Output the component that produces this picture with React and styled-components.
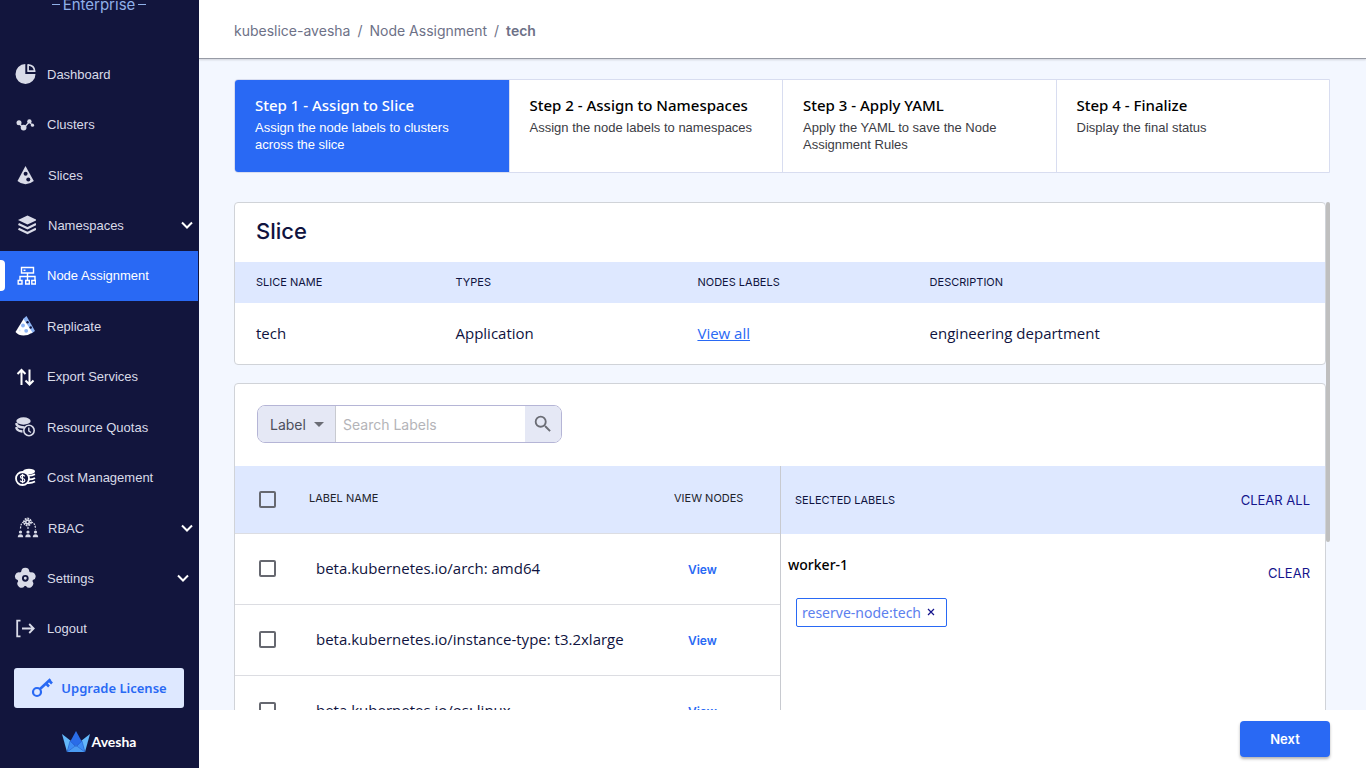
import React, { useState, useEffect, useRef } from 'react';
import styled, { createGlobalStyle } from 'styled-components';

const GlobalStyle = createGlobalStyle`
  *, *::before, *::after { box-sizing: border-box; }
  body {
    margin: 0;
    font-family: 'Noto Sans', sans-serif;
    color: #0f1340;
    background: #f3f7ff;
  }
  h1, h2, p, ul { margin: 0; padding: 0; }
  button, input, select { font-family: inherit; }
`;

const Page = styled.div`
  display: flex;
  height: 100vh;
`;

/* sidebar */

const Sidebar = styled.aside`
  display: flex;
  flex-direction: column;
  flex: 0 0 199px;
  padding-right: 1px;
  background: #12153d;
  overflow: hidden;
`;

const Edition = styled.div`
  display: flex;
  justify-content: center;
  flex: 0 0 49px;
  gap: 3px;
  overflow: hidden;
  color: #8fb0e8;
  font-family: Inter, sans-serif;
  font-size: 15px;
  line-height: 10px;

  &::before,
  &::after {
    content: '';
    width: 8px;
    height: 1px;
    margin-top: 4px;
    background: #8fb0e8;
  }
`;

const NavList = styled.ul`
  display: flex;
  flex-direction: column;
  flex: 1;
  list-style: none;
`;

const NavItem = styled.li`
  display: flex;
  flex: 1;
`;

const NavLink = styled.a`
  display: flex;
  align-items: center;
  flex: 1;
  gap: ${props => (props.$wide ? '12px' : '11px')};
  padding: 0 ${props => (props.$indent ? '9px' : '5px')} 0 14px;
  color: ${props => (props.$active ? '#fff' : '#d9dbe8')};
  background: ${props => (props.$active ? '#2969f4' : 'transparent')};
  font-family: 'Liberation Sans', Arial, sans-serif;
  font-size: 13px;
  text-decoration: none;

  &::before {
    content: '';
    display: ${props => (props.$active ? 'block' : 'none')};
    width: 5px;
    height: 31px;
    margin: 0 -2px 0 -14px;
    border-radius: 0 4px 4px 0;
    background: #fff;
  }

  svg:first-of-type {
    flex: none;
  }
`;

const NavText = styled.span`
  flex: 1;
  white-space: nowrap;
`;

const SidebarFooter = styled.div`
  display: flex;
  flex-direction: column;
  align-items: center;
  gap: 23px;
  flex: 0 0 114px;
  padding: 14px 14px 0;
`;

const UpgradeButton = styled.button`
  display: flex;
  align-items: center;
  justify-content: center;
  gap: 8px;
  width: 100%;
  height: 40px;
  padding: 0;
  border: 0;
  border-radius: 3px;
  background: #dee8ff;
  color: #2969f4;
  font-size: 13px;
  font-weight: 600;
  white-space: nowrap;
`;

const Brand = styled.div`
  display: flex;
  align-items: center;
  gap: 2px;
  color: #fff;
  font-family: Lato, sans-serif;
  font-size: 14px;
  font-weight: 700;
  line-height: 22px;
`;

/* main column */

const Main = styled.main`
  display: flex;
  flex-direction: column;
  flex: 1;
  min-width: 0;
`;

const TopBar = styled.header`
  flex: 0 0 59px;
  padding: 21px 35px 0;
  border-bottom: 1px solid #979ba5;
  box-shadow: 0 1px 2px rgba(0, 0, 0, 0.15);
  background: #fff;
`;

const Crumbs = styled.nav`
  display: flex;
  gap: 7px;
  color: #6d7187;
  font-family: Inter, sans-serif;
  font-size: 14px;
  line-height: 20px;
`;

const Crumb = styled.a`
  color: inherit;
  font-weight: ${props => (props.$current ? 600 : 400)};
  text-decoration: none;
`;

const Content = styled.div`
  display: flex;
  flex-direction: column;
  flex: 1;
  gap: 29px;
  min-height: 0;
  padding: 20px 36px 0 35px;
`;

const Steps = styled.div`
  display: grid;
  grid-template-columns: repeat(4, minmax(0, 1fr));
  flex: none;
  border: 1px solid #d8ddf0;
  border-radius: 4px 0 0 4px;
  background: #fff;
`;

const Step = styled.section`
  min-height: 92px;
  padding: 15px 20px;
  border-left: ${props => (props.$active ? 0 : '1px solid #d8ddf0')};
  border-radius: ${props => (props.$active ? '3px 0 0 3px' : 0)};
  background: ${props => (props.$active ? '#2969f4' : '#fff')};
  color: ${props => (props.$active ? '#fff' : '#000')};

  p {
    margin-top: 4px;
    color: ${props => (props.$active ? '#fff' : '#3c3c44')};
    font-family: 'Liberation Sans', Arial, sans-serif;
    font-size: 13px;
    line-height: 17px;
  }
`;

const StepTitle = styled.h2`
  font-size: 15px;
  font-weight: 500;
  line-height: 20px;
`;

const ScrollPane = styled.div`
  display: flex;
  flex: 1;
  min-height: 0;
`;

const ScrollArea = styled.div`
  display: flex;
  flex-direction: column;
  flex: 1;
  gap: 18px;
  min-width: 0;
  overflow-y: auto;
  scrollbar-width: none;
`;

const ScrollTrack = styled.div`
  flex: 0 0 4px;
  overflow: hidden;
`;

const ScrollThumb = styled.div`
  border-radius: 2px;
  background: #bfbfbf;
`;

const Card = styled.section`
  flex: none;
  border: 1px solid #d0d3d8;
  border-radius: 4px;
  background: #fff;
`;

const CardTitle = styled.h1`
  padding: 14px 21px 17px;
  font-family: Inter, sans-serif;
  font-size: 22px;
  font-weight: 500;
  line-height: 28px;
`;

const Table = styled.table`
  width: 100%;
  border-collapse: collapse;
  table-layout: fixed;
  text-align: left;
`;

const SliceHead = styled.th`
  width: ${props => props.$width};
  height: 41px;
  padding: 0 0 2px 21px;
  background: #dee8ff;
  font-family: Inter, sans-serif;
  font-size: 11px;
  font-weight: 400;
`;

const SliceCell = styled.td`
  height: 61px;
  padding: 0 0 2px 21px;
  font-family: 'Open Sans', sans-serif;
  font-size: 15px;
  font-weight: 500;

  a {
    color: #2969f4;
  }
`;

const Toolbar = styled.div`
  padding: 21px 22px 23px;
`;

const Search = styled.form`
  display: flex;
  width: 305px;
  height: 38px;
  overflow: hidden;
  border: 1px solid #b5b5d6;
  border-radius: 8px;
`;

const SelectBox = styled.div`
  display: grid;
  flex: 0 0 78px;
  align-items: center;
  border-right: 1px solid #c8cad0;
  background: #e5e8f5;

  > * {
    grid-area: 1 / 1;
  }
  svg {
    justify-self: end;
    margin-right: 11px;
    pointer-events: none;
  }
`;

const Select = styled.select`
  width: 100%;
  height: 36px;
  padding: 0 0 0 12px;
  appearance: none;
  border: 0;
  background: transparent;
  color: #4d4f5c;
  font-family: Inter, sans-serif;
  font-size: 14px;
`;

const SearchInput = styled.input`
  flex: 1;
  min-width: 0;
  padding: 0 7px;
  border: 0;
  outline: 0;
  font-family: Inter, sans-serif;
  font-size: 14px;

  &::placeholder {
    color: #b4b4b8;
  }
`;

const SearchButton = styled.button`
  display: grid;
  place-items: center;
  flex: 0 0 36px;
  padding: 0;
  border: 0;
  background: #e5e8f5;
`;

const Split = styled.div`
  display: grid;
  grid-template-columns: 1fr 1fr;
`;

const LabelHead = styled.th`
  width: ${props => props.$width};
  height: 67px;
  padding: 0 0 2px 10px;
  border-bottom: 1px solid #dcdde2;
  background: #dee8ff;
  color: #22242c;
  font-family: Inter, sans-serif;
  font-size: 11px;
  font-weight: 400;
`;

const LabelCell = styled.td`
  height: 71px;
  padding: 0 0 2px 17px;
  border-bottom: 1px solid #dcdde2;
  font-family: 'Open Sans', sans-serif;
  font-size: 15px;
  font-weight: 500;
  white-space: nowrap;
`;

const CheckHead = styled(LabelHead)`
  padding: 0 0 0 24px;
`;

const CheckCell = styled(LabelCell)`
  padding: 0 0 0 24px;
`;

const ViewCell = styled(LabelCell)`
  padding: 0 0 0 24px;
`;

const Checkbox = styled.input`
  display: block;
  width: 17px;
  height: 17px;
  margin: 0;
  appearance: none;
  border: 2px solid #666870;
  border-radius: 2px;

  &:checked {
    background: #2969f4;
  }
`;

const TextButton = styled.button`
  padding: 0;
  border: 0;
  background: none;
  color: ${props => (props.$primary ? '#2969f4' : '#14148c')};
  font-family: Inter, sans-serif;
  font-size: ${props => (props.$primary ? '12px' : '13px')};
  font-weight: ${props => (props.$primary ? 600 : 400)};
  line-height: 20px;
`;

const Selected = styled.div`
  border-left: 1px solid #c8cad0;
`;

const SelectedHead = styled.div`
  display: flex;
  align-items: center;
  justify-content: space-between;
  height: 68px;
  padding: 0 15px 0 14px;
  background: #dee8ff;
  font-family: Inter, sans-serif;
  font-size: 11px;
`;

const Worker = styled.div`
  display: flex;
  justify-content: space-between;
  padding: 21px 15px 0 7px;
  color: #000;
  font-size: 14px;
  font-weight: 500;
  line-height: 20px;

  button {
    margin-top: 8px;
  }
`;

const Chip = styled.span`
  display: inline-flex;
  align-items: center;
  gap: 6px;
  height: 29px;
  margin: 15px 15px 0;
  padding: 0 11px 0 5px;
  border: 1px solid #2969f4;
  border-radius: 2px;
  color: #5c80ee;
  font-size: 14px;
`;

const ChipClose = styled.button`
  display: flex;
  padding: 0 0 2px;
  border: 0;
  background: none;
  color: #14148c;
`;

const ActionBar = styled.footer`
  display: flex;
  justify-content: flex-end;
  flex: 0 0 58px;
  padding: 11px 36px;
  background: #fff;
`;

const NextButton = styled.button`
  width: 90px;
  height: 36px;
  border: 0;
  border-radius: 4px;
  background: #2969f4;
  box-shadow: 0 2px 3px rgba(0, 0, 0, 0.3);
  color: #fff;
  font-family: Inter, sans-serif;
  font-size: 13px;
  font-weight: 600;
`;

/* icons */

const Icon = ({ children, size = 22, ...rest }) => (
  <svg width={size} height={size} viewBox="0 0 22 22" fill="none" aria-hidden="true" {...rest}>
    {children}
  </svg>
);

const light = '#d9dbe8';

const DashboardIcon = () => (
  <Icon>
    <path d="M11.300 1A10 10 0 1 0 21.500 11H11.300Z" fill={light} />
    <path d="M12.400 0H22V10H12.400Z" fill="#12153d" />
    <path d="M14.100 1.800Q20.300 2.300 20.700 8.200H14.100Z" stroke={light} strokeWidth="1.700" strokeLinejoin="round" />
  </Icon>
);

const ClustersIcon = () => (
  <Icon>
    <path d="M5 9 9.500 14.500 15.500 7.500 18.500 12" stroke={light} strokeWidth="1.300" />
    <circle cx="5" cy="8.700" r="2.500" fill={light} />
    <circle cx="9.600" cy="13.600" r="2.900" fill={light} />
    <circle cx="15.400" cy="7.400" r="2.200" fill={light} />
    <circle cx="18.500" cy="11.200" r="1.600" fill={light} />
  </Icon>
);

const SlicesIcon = () => (
  <Icon>
    <path d="M11.500 2 19.800 17Q16 20.200 11.500 20.200T3.500 17Z" fill={light} />
    <circle cx="11.600" cy="9.700" r="2" fill="#12153d" />
    <circle cx="14.300" cy="15.500" r="2" fill="#12153d" />
  </Icon>
);

const NamespacesIcon = () => (
  <Icon>
    <path d="M13.500 1.500 23 6l-9.500 4.500L4 6Z" fill={light} />
    <path d="m4.500 10 9 4.300 8.500-4.300M4.500 14.800l9 4.200 8.500-4.200" stroke={light} strokeWidth="2.200" />
  </Icon>
);

const NodeIcon = () => (
  <Icon>
    <path
      d="M7.500 2.500h12v5.500h-12ZM13.500 8v7M6 15v-3.500h15V15M4.200 15.500h3.800v3.500H4.200ZM11.700 15.500h3.600v3.500h-3.600ZM17.800 15.500h3.700v3.500h-3.700Z"
      stroke="#fff"
      strokeWidth="1.400"
    />
    <path d="M9.500 5.300h2" stroke="#fff" strokeWidth="1.500" />
  </Icon>
);

const ReplicateIcon = () => (
  <Icon>
    <path d="m12.500 1 8.500 15-3.500 2.500L9 4Z" fill="#8db4f5" />
    <path d="M9.500 4 18.500 17.500Q14.500 20.500 9.500 20.500T1.500 17Z" fill="#fff" />
    <circle cx="9" cy="10.500" r="1.900" fill="#8db4f5" />
    <circle cx="12.200" cy="15.800" r="1.900" fill="#8db4f5" />
    <circle cx="5.700" cy="15.500" r="1" fill="#dce7fc" />
    <circle cx="13.500" cy="7.200" r="1.200" fill="#12153d" />
    <circle cx="16.700" cy="12.500" r="1.200" fill="#12153d" />
  </Icon>
);

const ExportIcon = () => (
  <Icon>
    <path d="M7.500 19V4M3.500 8l4-4 4 4M15.500 3.500v15M11.500 14.500l4 4 4-4" stroke="#fff" strokeWidth="2" />
  </Icon>
);

const QuotasIcon = () => (
  <Icon>
    <ellipse cx="9.500" cy="5" rx="7.200" ry="3.700" fill={light} />
    <path d="M2.500 8.500q2 3 8 3M2.500 12.500q1.500 2.800 6 3M2.500 7v2M2.500 11v2" stroke={light} strokeWidth="2.300" />
    <circle cx="15" cy="14.500" r="5.200" fill="#12153d" stroke={light} strokeWidth="1.600" />
    <path d="M14.800 11.500v3.500l2.200 1.500" stroke={light} strokeWidth="1.400" />
  </Icon>
);

const CostIcon = () => (
  <Icon>
    <ellipse cx="15" cy="4.500" rx="6" ry="2.700" fill="#fff" />
    <path d="M12 8.500q5 .8 9-1.300M13 12.300q5 .6 8-1.400M13 16q4.500.5 8-1.500" stroke="#fff" strokeWidth="1.800" />
    <circle cx="8.500" cy="11.500" r="6.500" fill="#12153d" stroke="#fff" strokeWidth="1.800" />
    <path d="M10.800 9.300q-1-1.100-2.300-1.100-2 0-2 1.600t2.100 1.700 2.200 1.700-2.300 1.700q-1.600 0-2.400-1.200M8.500 6.800v9.500" stroke="#fff" strokeWidth="1.200" />
  </Icon>
);

const person = x => (
  <g key={x} fill={light}>
    <circle cx={x} cy="15" r="1.600" />
    <path d={`M${x - 2.700} 20.300q0-3 2.700-3t2.700 3Z`} />
  </g>
);

const RbacIcon = () => (
  <Icon overflow="visible">
    <circle cx="13.500" cy="5" r="3.300" stroke={light} strokeWidth="2.200" strokeDasharray="1.700 .8" />
    <circle cx="13.500" cy="5" r="2.500" fill={light} />
    <circle cx="13.500" cy="5" r="1" fill="#12153d" />
    <path d="M10 5Q6.500 5.500 6.500 12.500M17 5q4.500.5 4.500 7.500M14 10v3" stroke={light} strokeWidth="1.200" strokeDasharray="2 1" />
    {[6.500, 14, 21.500].map(person)}
  </Icon>
);

const SettingsIcon = () => (
  <Icon>
    {[0, 72, 144, 216, 288].map(angle => (
      <circle key={angle} cx="11.300" cy="4.700" r="4" fill={light} transform={`rotate(${angle} 11.300 11.300)`} />
    ))}
    <circle cx="11.300" cy="11.300" r="7.800" fill={light} />
    <circle cx="11.300" cy="11.300" r="2.400" stroke="#12153d" strokeWidth="1.900" />
  </Icon>
);

const LogoutIcon = () => (
  <Icon>
    <path d="M6.500 2.700H3.200v15.600h3.300" stroke={light} strokeWidth="1.800" />
    <path d="M8 10.500h11.500M15.200 6l4.500 4.500-4.500 4.500" stroke={light} strokeWidth="1.800" />
  </Icon>
);

const KeyIcon = () => (
  <Icon>
    <circle cx="6" cy="15" r="4" stroke="#2969f4" strokeWidth="2.200" />
    <path d="M9 12 19.500 2.200M15 6.500l3 3M18 3.500l3 3" stroke="#2969f4" strokeWidth="2.600" />
  </Icon>
);

const Chevron = () => (
  <svg width="12" height="8" viewBox="0 0 12 8" fill="none" aria-hidden="true">
    <path d="m1 1.500 5 5 5-5" stroke="#fff" strokeWidth="2" />
  </svg>
);

const BrandLogo = () => (
  <svg width="28" height="22" viewBox="0 0 28 22" aria-hidden="true">
    <path d="M0 3 9 10 5 21Z" fill="#63b8fb" />
    <path d="M28 3 19 10l4 11Z" fill="#63b8fb" />
    <path d="M14 0 20 11 14 16 8 11Z" fill="#2a6ce8" />
    <path d="m8 10 6 6-9 5Z" fill="#3d8df5" />
    <path d="m20 10-6 6 9 5Z" fill="#3d8df5" />
    <path d="m14 14 9 7H5Z" fill="#4b9cf3" />
    <path d="M5 21 8 10l6 5.500L20 10l3 11M5 21l9-6.500L23 21" fill="none" stroke="#1e55c4" strokeWidth=".5" />
  </svg>
);

const navItems = [
  { label: 'Dashboard', icon: DashboardIcon },
  { label: 'Clusters', icon: ClustersIcon },
  { label: 'Slices', icon: SlicesIcon, wide: true },
  { label: 'Namespaces', icon: NamespacesIcon, expandable: true, wide: true },
  { label: 'Node Assignment', icon: NodeIcon, active: true },
  { label: 'Replicate', icon: ReplicateIcon },
  { label: 'Export Services', icon: ExportIcon },
  { label: 'Resource Quotas', icon: QuotasIcon },
  { label: 'Cost Management', icon: CostIcon },
  { label: 'RBAC', icon: RbacIcon, expandable: true, wide: true },
  { label: 'Settings', icon: SettingsIcon, expandable: true, indent: true },
  { label: 'Logout', icon: LogoutIcon },
];

const steps = [
  { title: 'Step 1 - Assign to Slice', text: 'Assign the node labels to clusters across the slice' },
  { title: 'Step 2 - Assign to Namespaces', text: 'Assign the node labels to namespaces' },
  { title: 'Step 3 - Apply YAML', text: 'Apply the YAML to save the Node Assignment Rules' },
  { title: 'Step 4 - Finalize', text: 'Display the final status' },
];

const nodeLabels = [
  'beta.kubernetes.io/arch: amd64',
  'beta.kubernetes.io/instance-type: t3.2xlarge',
  'beta.kubernetes.io/os: linux',
  'kubernetes.io/arch: amd64',
  'kubernetes.io/hostname: worker-1',
  'kubernetes.io/os: linux',
];

const App = () => {
  const [checked, setChecked] = useState([]);
  const [query, setQuery] = useState('');
  const [thumb, setThumb] = useState({ height: 0, offset: 0 });
  const scrollRef = useRef(null);

  // keeps the slim scroll thumb in step with the scrolled area
  const updateThumb = () => {
    const { clientHeight, scrollHeight, scrollTop } = scrollRef.current;
    const ratio = clientHeight / scrollHeight;
    setThumb({ height: ratio < 1 ? clientHeight * ratio : 0, offset: scrollTop * ratio });
  };

  useEffect(() => {
    updateThumb();
    window.addEventListener('resize', updateThumb);
    return () => window.removeEventListener('resize', updateThumb);
  }, []);

  const toggle = name =>
    setChecked(checked.includes(name) ? checked.filter(n => n !== name) : [...checked, name]);

  const toggleAll = () => setChecked(checked.length === nodeLabels.length ? [] : nodeLabels);

  return (
    <Page>
      <GlobalStyle />
      <Sidebar>
        <Edition>Enterprise</Edition>
        <NavList>
          {navItems.map(({ label, icon: ItemIcon, active, expandable, indent, wide }) => (
            <NavItem key={label}>
              <NavLink href="#" $active={active} $indent={indent} $wide={wide}>
                <ItemIcon />
                <NavText>{label}</NavText>
                {expandable && <Chevron />}
              </NavLink>
            </NavItem>
          ))}
        </NavList>
        <SidebarFooter>
          <UpgradeButton type="button">
            <KeyIcon />
            Upgrade License
          </UpgradeButton>
          <Brand>
            <BrandLogo />
            Avesha
          </Brand>
        </SidebarFooter>
      </Sidebar>

      <Main>
        <TopBar>
          <Crumbs aria-label="Breadcrumb">
            <Crumb href="#">kubeslice-avesha</Crumb>
            <span>/</span>
            <Crumb href="#">Node Assignment</Crumb>
            <span>/</span>
            <Crumb href="#" $current>tech</Crumb>
          </Crumbs>
        </TopBar>

        <Content>
          <Steps>
            {steps.map((step, i) => (
              <Step key={step.title} $active={i === 0}>
                <StepTitle>{step.title}</StepTitle>
                <p>{step.text}</p>
              </Step>
            ))}
          </Steps>

          <ScrollPane>
            <ScrollArea ref={scrollRef} onScroll={updateThumb}>
              <Card>
                <CardTitle>Slice</CardTitle>
                <Table>
                  <thead>
                    <tr>
                      <SliceHead $width="18.3%">SLICE NAME</SliceHead>
                      <SliceHead $width="22.2%">TYPES</SliceHead>
                      <SliceHead $width="21.3%">NODES LABELS</SliceHead>
                      <SliceHead>DESCRIPTION</SliceHead>
                    </tr>
                  </thead>
                  <tbody>
                    <tr>
                      <SliceCell>tech</SliceCell>
                      <SliceCell>Application</SliceCell>
                      <SliceCell><a href="#">View all</a></SliceCell>
                      <SliceCell>engineering department</SliceCell>
                    </tr>
                  </tbody>
                </Table>
              </Card>

              <Card>
                <Toolbar>
                  <Search onSubmit={e => e.preventDefault()}>
                    <SelectBox>
                      <Select aria-label="Search by">
                        <option>Label</option>
                        <option>Node</option>
                      </Select>
                      <svg width="10" height="5" viewBox="0 0 10 5" aria-hidden="true">
                        <path d="M0 0h10L5 5Z" fill="#6b6d75" />
                      </svg>
                    </SelectBox>
                    <SearchInput
                      aria-label="Search Labels"
                      placeholder="Search Labels"
                      value={query}
                      onChange={e => setQuery(e.target.value)}
                    />
                    <SearchButton type="submit" aria-label="Search">
                      <svg width="22" height="22" viewBox="0 0 24 24" fill="#6b6d75" aria-hidden="true">
                        <path d="M15.500 14h-.79l-.28-.27A6.471 6.471 0 0 0 16 9.500 6.500 6.500 0 1 0 9.500 16c1.610 0 3.090-.59 4.230-1.570l.27.28v.79l5 4.990L20.490 19l-4.990-5zm-6 0C7.010 14 5 11.990 5 9.500S7.010 5 9.500 5 14 7.010 14 9.500 11.990 14 9.500 14z" />
                      </svg>
                    </SearchButton>
                  </Search>
                </Toolbar>

                <Split>
                  <Table>
                    <thead>
                      <tr>
                        <CheckHead $width="64px">
                          <Checkbox
                            type="checkbox"
                            aria-label="Select all labels"
                            checked={checked.length === nodeLabels.length}
                            onChange={toggleAll}
                          />
                        </CheckHead>
                        <LabelHead>LABEL NAME</LabelHead>
                        <LabelHead $width="116px">VIEW NODES</LabelHead>
                      </tr>
                    </thead>
                    <tbody>
                      {nodeLabels.map(name => (
                        <tr key={name}>
                          <CheckCell>
                            <Checkbox
                              type="checkbox"
                              aria-label={name}
                              checked={checked.includes(name)}
                              onChange={() => toggle(name)}
                            />
                          </CheckCell>
                          <LabelCell>{name}</LabelCell>
                          <ViewCell>
                            <TextButton type="button" $primary>View</TextButton>
                          </ViewCell>
                        </tr>
                      ))}
                    </tbody>
                  </Table>

                  <Selected>
                    <SelectedHead>
                      SELECTED LABELS
                      <TextButton type="button">CLEAR ALL</TextButton>
                    </SelectedHead>
                    <Worker>
                      worker-1
                      <TextButton type="button">CLEAR</TextButton>
                    </Worker>
                    <Chip>
                      reserve-node:tech
                      <ChipClose type="button" aria-label="Remove label">
                        <svg width="8" height="8" viewBox="0 0 8 8" aria-hidden="true">
                          <path d="m1 1 6 6M7 1 1 7" stroke="currentColor" strokeWidth="1.200" />
                        </svg>
                      </ChipClose>
                    </Chip>
                  </Selected>
                </Split>
              </Card>
            </ScrollArea>
            <ScrollTrack>
              <ScrollThumb style={{ height: thumb.height, marginTop: thumb.offset }} />
            </ScrollTrack>
          </ScrollPane>
        </Content>

        <ActionBar>
          <NextButton type="button">Next</NextButton>
        </ActionBar>
      </Main>
    </Page>
  );
};

export default App;
